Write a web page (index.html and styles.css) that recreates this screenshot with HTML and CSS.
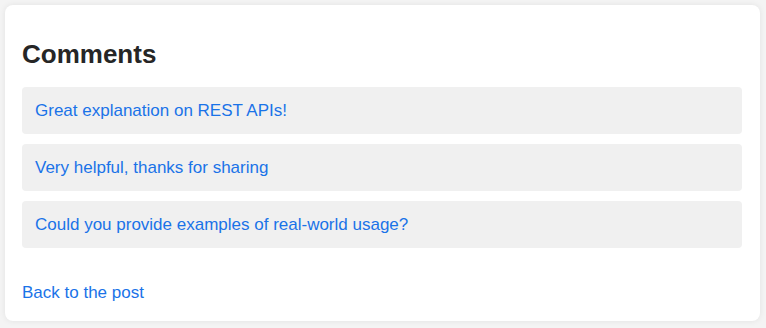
FILE: index.html
```html
<!DOCTYPE html>
<html lang="en">
<head>
    <meta charset="UTF-8">
    <meta name="viewport" content="width=device-width, initial-scale=1.0">
    <title>Comments</title>
    <link rel="stylesheet" href="styles.css">
</head>
<body>
    <div class="card">
        <h2 class="title">Comments</h2>

        <ul class="comments">
            <li class="comment"><a href="#">Great explanation on REST APIs!</a></li>
            <li class="comment"><a href="#">Very helpful, thanks for sharing</a></li>
            <li class="comment"><a href="#">Could you provide examples of real-world usage?</a></li>
        </ul>

        <a class="back" href="#">Back to the post</a>
    </div>
</body>
</html>
```

FILE: styles.css
```css
body {
    font-family: 'Liberation Sans', Arial, sans-serif;
    background: #f4f4f4;
    margin: 0;
    padding: 5px 6px 5px 5px;
}

.card {
    background: white;
    border-radius: 8px;
    box-shadow: 0 0 6px rgba(0,0,0,0.08);
    padding: 19px 18px 18px 17px;
}

.title {
    font-size: 26px;
    color: #262626;
    margin: 15px 0 17px;
}

.comments {
    list-style: none;
    margin: 0 0 35px;
    padding: 0;
    display: flex;
    flex-direction: column;
    gap: 10px;
}

.comment {
    background: #f0f0f0;
    border-radius: 4px;
    padding: 14px 13px;
    font-size: 17px;
    line-height: 19px;
}

a {
    color: #1a73e8;
    text-decoration: none;
}

.back {
    font-size: 17px;
}
```
